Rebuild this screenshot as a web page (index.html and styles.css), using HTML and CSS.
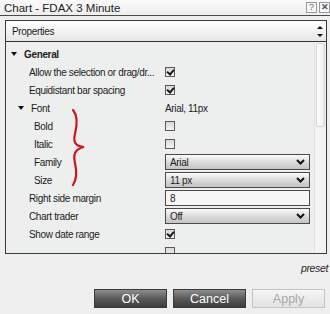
FILE: index.html
```html
<!DOCTYPE html>
<html lang="en">
<head>
    <meta charset="UTF-8">
    <title>Chart - FDAX 3 Minute</title>
    <link rel="stylesheet" href="styles.css">
</head>
<body>
    <!-- Title bar -->
    <header class="titlebar">
        <span class="title">Chart - FDAX 3 Minute</span>
        <span class="tb-btn">?</span>
        <span class="tb-btn close">&#x2715;</span>
    </header>

    <!-- Properties grid -->
    <section class="panel">
        <div class="panel-head">
            <span class="head-label">Properties</span>
            <span class="head-arrows">
                <span class="arr-up"></span>
                <span class="arr-down"></span>
            </span>
        </div>
        <div class="panel-body">
            <div class="grid">
                <div class="row">
                    <div class="name lvl0"><span class="caret"></span><b>General</b></div>
                    <div class="value"></div>
                </div>
                <div class="row">
                    <div class="name lvl1">Allow the selection or drag/dr...</div>
                    <div class="value"><span class="check on"></span></div>
                </div>
                <div class="row">
                    <div class="name lvl1">Equidistant bar spacing</div>
                    <div class="value"><span class="check on"></span></div>
                </div>
                <div class="row">
                    <div class="name lvl1b"><span class="caret"></span>Font</div>
                    <div class="value">Arial, 11px</div>
                </div>
                <div class="row">
                    <div class="name lvl2">Bold</div>
                    <div class="value"><span class="check"></span></div>
                </div>
                <div class="row">
                    <div class="name lvl2">Italic</div>
                    <div class="value"><span class="check"></span></div>
                </div>
                <div class="row">
                    <div class="name lvl2">Family</div>
                    <div class="value">
                        <div class="select">Arial
                            <svg width="9" height="6" viewBox="0 0 9 6"><polyline points="1,1 4.5,4.5 8,1" fill="none" stroke="#111" stroke-width="2"/></svg>
                        </div>
                    </div>
                </div>
                <div class="row">
                    <div class="name lvl2">Size</div>
                    <div class="value">
                        <div class="select">11 px
                            <svg width="9" height="6" viewBox="0 0 9 6"><polyline points="1,1 4.5,4.5 8,1" fill="none" stroke="#111" stroke-width="2"/></svg>
                        </div>
                    </div>
                </div>
                <div class="row">
                    <div class="name lvl1">Right side margin</div>
                    <div class="value"><div class="textbox">8</div></div>
                </div>
                <div class="row">
                    <div class="name lvl1">Chart trader</div>
                    <div class="value">
                        <div class="select">Off
                            <svg width="9" height="6" viewBox="0 0 9 6"><polyline points="1,1 4.5,4.5 8,1" fill="none" stroke="#111" stroke-width="2"/></svg>
                        </div>
                    </div>
                </div>
                <div class="row">
                    <div class="name lvl1">Show date range</div>
                    <div class="value"><span class="check on"></span></div>
                </div>
                <div class="row">
                    <div class="name lvl1"></div>
                    <div class="value"><span class="check"></span></div>
                </div>

                <!-- red annotation brace -->
                <svg class="brace" width="24" height="80" viewBox="0 0 24 80">
                    <path d="M5,2 C10,8 9,18 7,26 C5,34 7,38 16,39 C7,41 5,46 7,55 C9,64 9,71 5,77" fill="none" stroke="#d3121c" stroke-width="2.2" stroke-linecap="round"/>
                </svg>
            </div>
            <div class="scroll">
                <div class="thumb"></div>
            </div>
        </div>
    </section>

    <!-- Footer -->
    <div class="preset">preset</div>
    <div class="buttons">
        <button class="btn">OK</button>
        <button class="btn">Cancel</button>
        <button class="btn disabled">Apply</button>
    </div>
</body>
</html>
```

FILE: styles.css
```css
/* General Reset */
* {
    margin: 0;
    padding: 0;
    box-sizing: border-box;
}

body {
    width: 330px;
    height: 314px;
    overflow: hidden;
    background-color: #eeefee;
    font-family: "Liberation Sans", Arial, sans-serif;
    font-size: 10px;
    letter-spacing: -0.35px;
    color: #1c1c1c;
}

/* Title bar */
.titlebar {
    display: flex;
    align-items: center;
    height: 16px;
    padding-left: 4px;
    background: linear-gradient(#fafafa, #eeeeee);
    border-bottom: 1px solid #4a4a4a;
    letter-spacing: 0;
}

.title {
    flex: 1;
    font-size: 11.5px;
    color: #222;
}

.tb-btn {
    width: 11px;
    height: 11px;
    margin-left: 2px;
    border: 1px solid #9a9a9a;
    background: #f7f7f7;
    color: #666;
    font-size: 9px;
    line-height: 9px;
    text-align: center;
}

.tb-btn.close {
    font-weight: bold;
    color: #555;
}

/* Panel */
.panel {
    margin: 4px 3px 0 5px;
    height: 234px;
    border: 1px solid #3a3a3a;
    display: flex;
    flex-direction: column;
}

.panel-head {
    display: flex;
    align-items: center;
    height: 21px;
    border-bottom: 1px solid #333;
    background: linear-gradient(#ffffff, #e6e6e6);
}

.head-label {
    flex: 1;
    padding-left: 6px;
}

.head-arrows {
    width: 12px;
    display: flex;
    flex-direction: column;
    align-items: center;
    gap: 5px;
}

.arr-up, .arr-down {
    width: 0;
    height: 0;
    border-left: 3px solid transparent;
    border-right: 3px solid transparent;
}

.arr-up {
    border-bottom: 3px solid #111;
}

.arr-down {
    border-top: 3px solid #111;
}

.panel-body {
    flex: 1;
    display: flex;
    overflow: hidden;
    background-color: #edefee;
}

.grid {
    position: relative;
    flex: 1;
    padding-top: 3px;
    overflow: hidden;
}

.row {
    display: grid;
    grid-template-columns: 159px 1fr;
    height: 18px;
    align-items: center;
}

.name {
    display: flex;
    align-items: center;
    white-space: nowrap;
}

.name b {
    font-weight: bold;
}

.lvl0 { padding-left: 4px; }
.lvl1 { padding-left: 23px; }
.lvl1b { padding-left: 11px; }
.lvl2 { padding-left: 28px; }

.caret {
    width: 0;
    height: 0;
    margin: 0 7px 0 1px;
    border-left: 3px solid transparent;
    border-right: 3px solid transparent;
    border-top: 4px solid #111;
}

.value {
    display: flex;
    align-items: center;
    padding-right: 4px;
}

/* Checkbox */
.check {
    position: relative;
    width: 10px;
    height: 10px;
    border: 1px solid #5a5a5a;
    background: linear-gradient(#d8d8d8, #f4f4f4);
}

.check.on::after {
    content: "";
    position: absolute;
    left: 2px;
    top: 0;
    width: 3px;
    height: 5px;
    border: solid #1a1a1a;
    border-width: 0 2px 2px 0;
    transform: rotate(40deg);
}

/* Select and textbox */
.select, .textbox {
    flex: 1;
    height: 16px;
    display: flex;
    align-items: center;
    padding: 0 4px;
    border: 1px solid #4a4a4a;
}

.select {
    justify-content: space-between;
    background: linear-gradient(#fbfbfb, #d6d6d6 60%, #c4c4c4);
}

.textbox {
    background-color: #f6f6f6;
}

.brace {
    position: absolute;
    left: 62px;
    top: 66px;
}

/* Scroll bar */
.scroll {
    width: 12px;
    padding: 1px 1px 0 1px;
    border-left: 1px solid #e2e2e2;
    background-color: #f2f3f2;
}

.thumb {
    height: 84px;
    border: 1px solid #d4d4d4;
    border-radius: 2px;
    background: linear-gradient(90deg, #ffffff, #ececec);
}

/* Footer */
.preset {
    margin-top: 8px;
    padding-right: 2px;
    text-align: right;
    font-style: italic;
    font-size: 10.5px;
    color: #2a2a2a;
}

.buttons {
    display: flex;
    justify-content: flex-end;
    gap: 6px;
    margin-top: 15px;
    padding-right: 5px;
}

.btn {
    width: 73px;
    height: 19px;
    border: 1px solid #3a3a3a;
    background: linear-gradient(#8e8e8e, #5a5a5a 50%, #3e3e3e);
    color: #ffffff;
    font-family: "Liberation Sans", Arial, sans-serif;
    font-size: 12.5px;
}

.btn.disabled {
    border-color: #c4c4c4;
    background: linear-gradient(#f6f6f6, #e2e2e2);
    color: #a8a8a8;
}
```
